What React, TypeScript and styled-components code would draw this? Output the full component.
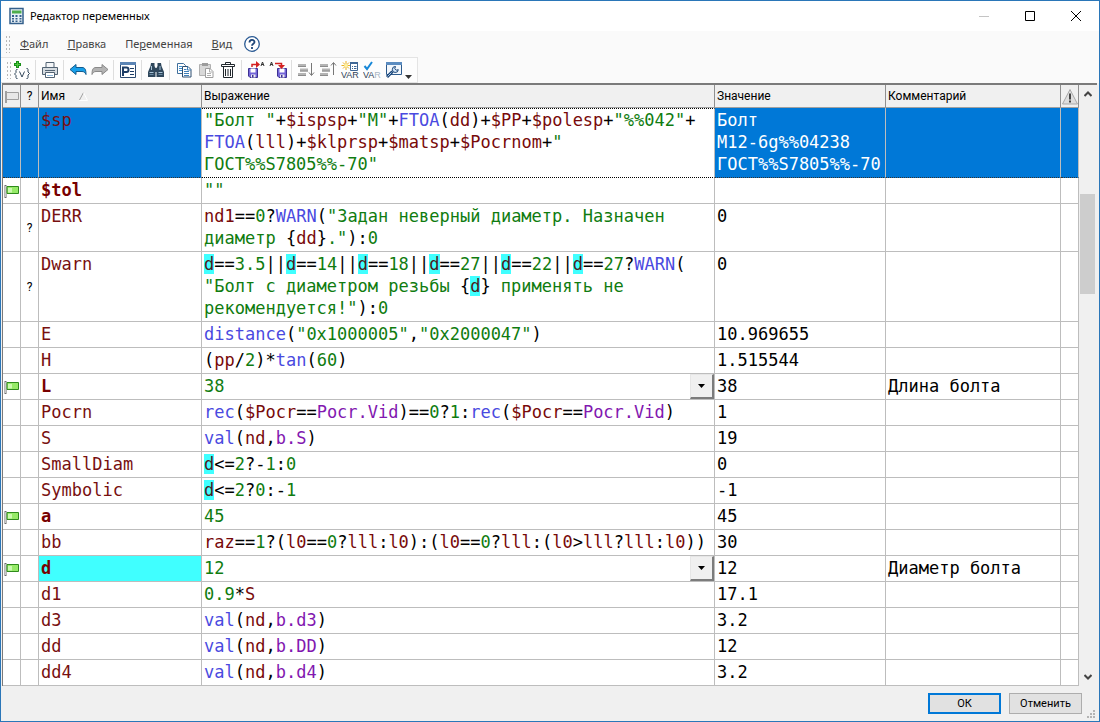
import React from 'react';
import styled, { createGlobalStyle } from 'styled-components';

const uiFont = '"Noto Sans", "Open Sans", sans-serif';
const labelFont = 'Roboto, "Noto Sans", sans-serif';
const codeFont = '"DejaVu Sans Mono", "Liberation Mono", monospace';

const GlobalStyle = createGlobalStyle`
  *, *::before, *::after { box-sizing: border-box; }
  body { margin: 0; background: #f0f0f0; font-family: ${uiFont}; font-size: 12px; color: #000; }
`;

const Window = styled.main`
  min-height: 100vh;
  display: flex;
  flex-direction: column;
  border: 1px solid #2a76b8;
  background: #f0f0f0;
`;

const TitleBar = styled.header`
  display: flex;
  align-items: center;
  height: 30px;
  padding-left: 8px;
  background: #fff;
`;

const Title = styled.h1`
  flex: 1;
  margin: 0 0 0 5px;
  font-size: 11px;
  font-weight: 400;
  line-height: 16px;
`;

const WindowButton = styled.button`
  display: flex;
  align-items: center;
  justify-content: center;
  width: 46px;
  height: 28px;
  padding: 0;
  border: 0;
  background: transparent;
`;

const Bars = styled.div`
  background: #fafafa;
`;

const MenuBar = styled.nav`
  display: flex;
  align-items: center;
  height: 26px;
  padding-left: 4px;
  gap: 19px;
`;

const MenuItem = styled.button`
  padding: 0;
  border: 0;
  background: transparent;
  font: 11px/18px ${uiFont};
  color: #444;
`;

const HelpButton = styled(MenuItem)`
  display: flex;
  margin-left: -7px;
`;

const Grip = styled.span`
  width: 5px;
  height: 18px;
  margin-right: -9px;
  background-image: radial-gradient(circle, #b8b8b8 0 1px, transparent 1px);
  background-size: 3px 4px;
`;

const ToolBar = styled.div`
  display: flex;
  align-items: center;
  width: fit-content;
  height: 26px;
  padding-left: 5px;
  border: 1px solid #e4e4e4;
  border-left: 0;
  background: #fdfdfd;
`;

const ToolGrip = styled(Grip)`
  margin-right: 0;
`;

const ToolButton = styled.button`
  display: flex;
  align-items: center;
  justify-content: center;
  width: 22px;
  height: 22px;
  padding: 0;
  border: 0;
  background: transparent;
`;

const MoreButton = styled(ToolButton)`
  width: 12px;
  align-items: flex-end;
  justify-content: flex-start;
`;

const Separator = styled.span`
  width: 1px;
  height: 20px;
  margin: 0 3px 0 2px;
  background: #dedede;
`;

const GridPane = styled.section`
  flex: 1;
  display: flex;
  margin: 0 2px 0 1px;
  border: solid #7a7a7a;
  border-width: 2px 0 0 1px;
  background: #fff;
`;

const Table = styled.table`
  flex: 1;
  min-width: 0;
  width: 100%;
  table-layout: fixed;
  border-collapse: separate;
  border-spacing: 0;
`;

const Col = styled.col<{ $width?: number }>`
  ${p => (p.$width ? `width: ${p.$width}px;` : '')}
`;

const HeadCell = styled.th<{ $center?: boolean }>`
  height: 23px;
  padding: ${p => (p.$center ? '0' : '0 2px')};
  border-right: 1px solid #8f8f8f;
  border-bottom: 1px solid #a0a0a0;
  background: #f0f0f0;
  font: 400 12px/20px ${labelFont};
  text-align: ${p => (p.$center ? 'center' : 'left')};
  white-space: nowrap;

  svg { vertical-align: middle; }
`;

const SortMark = styled.svg`
  margin-left: 14px;
`;

const Cell = styled.td<{ $selected?: boolean; $focus?: boolean; $marked?: boolean }>`
  height: 26px;
  padding: 1px 2px 2px;
  border-right: 1px solid #bdbdbd;
  border-bottom: 1px solid #bdbdbd;
  background: ${p => (p.$selected ? '#0078d7' : p.$marked ? '#40ffff' : '#fff')};
  color: ${p => (p.$selected ? '#fff' : '#000')};
  font: 17px/22px ${codeFont};
  vertical-align: top;
  white-space: pre;
  overflow: hidden;
  ${p => (p.$selected ? 'border-bottom: 1px dotted #333;' : '')}
  ${p => (p.$focus ? 'padding-top: 0; border-top: 1px dotted #000; border-bottom: 1px dotted #000;' : '')}
`;

const MarkCell = styled(Cell)`
  padding: 0;
  font: 12px/16px ${labelFont};
  text-align: center;
  vertical-align: middle;

  svg { display: block; }
`;

const Name = styled.span<{ $bold?: boolean }>`
  color: ${p => (p.$bold ? '#780000' : '#781010')};
  font-weight: ${p => (p.$bold ? 700 : 400)};
`;

type Kind = 'text' | 'num' | 'func' | 'ident' | 'member' | 'op' | 'hit';

const kindColor: Record<Kind, string> = {
  text: '#107c10',
  num: '#107c10',
  func: '#4a4ae0',
  ident: '#780a0a',
  member: '#8218b0',
  op: '#000',
  hit: '#4a2020',
};

const CodeLine = styled.div`
  height: 22px;
`;

const Token = styled.span<{ $kind: Kind }>`
  color: ${p => kindColor[p.$kind]};
  ${p => (p.$kind === 'hit' ? 'background: #40ffff;' : '')}
`;

const Combo = styled.div`
  display: grid;
  grid-template-columns: 1fr 24px;
  margin: -1px -2px -2px 0;
`;

const ComboSelect = styled.select`
  grid-area: 1 / 1 / 2 / 3;
  height: 25px;
  padding: 0 0 1px;
  border: 0;
  appearance: none;
  background: transparent;
  color: #107c10;
  font: 17px/22px ${codeFont};
`;

const ComboArrow = styled.span`
  grid-area: 1 / 2;
  display: flex;
  align-items: center;
  justify-content: center;
  border: solid;
  border-width: 1px 2px 2px 1px;
  border-color: #e6e6e6 #7c7c7c #7c7c7c #e6e6e6;
  background: #f0f0f0;
  pointer-events: none;
`;

const ScrollBar = styled.div`
  display: flex;
  flex-direction: column;
  width: 18px;
  background: #f0f0f0;
`;

const ScrollButton = styled.button`
  display: flex;
  align-items: center;
  justify-content: center;
  height: 18px;
  padding: 0;
  border: 0;
  background: transparent;
`;

const ScrollTrack = styled.div`
  flex: 1;
  display: grid;
  grid-template-rows: 91fr 100fr 374fr;
`;

const ScrollThumb = styled.div`
  grid-row: 2;
  margin: 0 2px 0 1px;
  background: #cdcdcd;
`;

const Footer = styled.footer`
  display: flex;
  align-items: center;
  justify-content: flex-end;
  gap: 8px;
  height: 35px;
  padding-left: 8px;
`;

const DialogButton = styled.button<{ $primary?: boolean }>`
  width: 73px;
  height: 21px;
  padding: 0;
  border: ${p => (p.$primary ? '2px solid #0078d7' : '1px solid #adadad')};
  background: #e1e1e1;
  font: 11px/16px ${labelFont};
`;

const SizeGrip = styled.svg`
  align-self: flex-end;
  margin: 0 4px 3px -3px;
`;

const FlagIcon = () => (
  <svg width="17" height="16" viewBox="0 0 17 16">
    <path d="M2.500 2v13" stroke="#6d6d6d" strokeWidth="2" />
    <path d="M2.500 3v11" stroke="#c8c8c8" />
    <path d="M4 3.500h11.500v7H4z" fill="#96ea68" stroke="#2f8a1c" />
    <path d="M5 5h4v4.500h-4z" fill="#ccf8b0" />
  </svg>
);

const icon = (children: React.ReactNode) => (
  <svg width="18" height="18" viewBox="0 0 18 18" fill="none">{children}</svg>
);

const Floppy = ({ x }: { x: number }) => (
  <g transform={`translate(${x} 7)`}>
    <path d="M.5.5h9v9H2l-1.500-1.500z" fill="#7466d8" stroke="#3d3192" />
    <path d="M2.500.5h5v4h-5z" fill="#fff" />
    <path d="M3 6.500h4.500V9.500H3z" fill="#eee" />
    <path d="M4 7h1.500v2.500H4z" fill="#3d3192" />
  </g>
);

const VarText = ({ fade }: { fade?: boolean }) => (
  <text x="0" y="17" fontSize="9" fontFamily="Liberation Sans, sans-serif" fill="#2f4256">
    VA<tspan fill={fade ? '#a9b6c4' : '#2f4256'}>R</tspan>
  </text>
);

const tools: ({ label: string; art: React.ReactNode } | null)[] = [
  {
    label: 'Новая переменная',
    art: icon(<>
      <path d="M4.500 0v7M1 3.500h7" stroke="#189018" strokeWidth="3" />
      <path d="M4.500 1v5M2 3.500h5" stroke="#50c840" />
      <path d="M4.500 8.500h-1l-.5 1v2l-1.500 1.500 1.500 1.500v2l.5 1h1M13.500 7.500h1l.5 1v2.500l1.500 1.500-1.500 1.500v2.500l-.5 1h-1M6.500 10.500l2.500 5.500 2.500-5.500" stroke="#33475a" />
    </>),
  },
  null,
  {
    label: 'Печать',
    art: icon(<>
      <path d="M5 6V1.500h8V6" fill="#f4f6f8" stroke="#526373" />
      <path d="M1.500 6.500h15v7h-15z" fill="#d6dce1" stroke="#526373" />
      <path d="M4 9.500h10" stroke="#526373" />
      <path d="M4.500 11.500h9v5h-9z" fill="#fff" stroke="#526373" />
      <path d="M6 14.500h6" stroke="#8ab4d8" />
    </>),
  },
  null,
  {
    label: 'Отменить действие',
    art: icon(<path d="M1 8.500l6-5v3h6c3 0 4 2 4 7-1-2-2-3-4-3H7v3z" fill="#18a0ea" stroke="#125a8c" />),
  },
  {
    label: 'Повторить действие',
    art: icon(<path d="M17 8.500l-6-5v3H5c-3 0-4 2-4 7 1-2 2-3 4-3h6v3z" fill="#b4b4b4" stroke="#8a8a8a" />),
  },
  null,
  {
    label: 'Свойства',
    art: icon(<>
      <path d="M1.500 1.500h15v15h-15z" fill="#fff" stroke="#2c4a70" />
      <path d="M1 1h16v3H1z" fill="#5b84b4" />
      <path d="M4 15V6.500h3.500q2 0 2 2.200t-2 2.200H4" stroke="#1d3d66" strokeWidth="2" />
      <path d="M11 7.500h4M11 10.500h4M11 13.500h4" stroke="#1d3d66" />
    </>),
  },
  null,
  {
    label: 'Найти',
    art: icon(<>
      <path d="M4 2h3.500v3L8.500 7v9H1v-5l2.500-6zM14 2h-3.500v3L9.500 7v9H17v-5l-2.500-6z" fill="#2f475c" />
      <path d="M8 7h2v4H8z" fill="#2f475c" />
      <path d="M2.500 11.500h4M11.500 11.500h4M4.500 5v4M13 5v4" stroke="#a9c4d8" />
      <path d="M2.500 13.500h4M11.500 13.500h4" stroke="#6b8ba3" />
    </>),
  },
  null,
  {
    label: 'Копировать',
    art: icon(<>
      <path d="M2.500 2.500h6l2 2v8h-8z" fill="#fff" stroke="#3f6f9c" />
      <path d="M4 5.500h3M4 7.500h4M4 9.500h4" stroke="#3f8fd0" />
      <path d="M7.500 5.500h5.500l3 3v7.500H7.500z" fill="#fff" stroke="#2f4f70" />
      <path d="M12.500 5.500v3.500h3.500M9 8.500h2.500M9 10.500h5M9 12.500h5M9 14.500h5" stroke="#3f7fb8" />
    </>),
  },
  {
    label: 'Вставить',
    art: icon(<>
      <path d="M2.500 3.500h11v11h-11z" fill="#d8d8d8" stroke="#b0b0b0" />
      <path d="M5 2h6v3H5z" fill="#9c9c9c" />
      <path d="M8.500 7.500h4.500l3 3v6H8.500z" fill="#fff" stroke="#9c9c9c" />
      <path d="M10 12.500h4M10 14.500h4M12.500 8v3h3" stroke="#b0b0b0" />
    </>),
  },
  {
    label: 'Удалить',
    art: icon(<>
      <path d="M6.500 3V1.500h5V3" stroke="#20262c" />
      <path d="M2.500 3.500h13v2h-13z" fill="#fff" stroke="#20262c" />
      <path d="M4.500 5.500h9v11h-9z" stroke="#20262c" />
      <path d="M6.500 8v7M9 8v7M11.500 8v7" stroke="#20262c" />
    </>),
  },
  null,
  {
    label: 'Сохранить в файл',
    art: icon(<>
      <Floppy x={1} />
      <path d="M5 6V3.500h6" stroke="#d42020" strokeWidth="1.500" />
      <path d="M9 0l4 3.500L9 7z" fill="#d42020" />
      <path d="M14 5l1.500-4L17 5M14.500 3.500h2" stroke="#333" />
    </>),
  },
  {
    label: 'Загрузить из файла',
    art: icon(<>
      <Floppy x={8} />
      <path d="M6 2.500h6.500V5" stroke="#d42020" strokeWidth="1.500" />
      <path d="M9 4h7l-3.500 4z" fill="#d42020" />
      <path d="M1 5l1.500-4L4 5M1.500 3.500h2" stroke="#333" />
    </>),
  },
  null,
  {
    label: 'Переместить вниз',
    art: icon(<>
      <path d="M1 3h8v3H1zM3 7.500h8v3H3zM1 12h8v3H1z" fill="#b4b4b4" />
      <path d="M1 5.500h8M3 10h8M1 14.500h8" stroke="#8c8c8c" />
      <path d="M14.500 2v12M12 11.500l2.500 3 2.500-3" stroke="#777" />
    </>),
  },
  {
    label: 'Переместить вверх',
    art: icon(<>
      <path d="M1 3h8v3H1zM3 7.500h8v3H3zM1 12h8v3H1z" fill="#b4b4b4" />
      <path d="M1 5.500h8M3 10h8M1 14.500h8" stroke="#8c8c8c" />
      <path d="M14.500 14V2M12 4.500l2.500-3 2.500 3" stroke="#777" />
    </>),
  },
  {
    label: 'Создать переменную',
    art: icon(<>
      <path d="M5 0v9M.5 4.500h9M2 1.500l6 6M8 1.500l-6 6" stroke="#eab020" />
      <circle cx="5" cy="4.500" r="1.800" fill="#fff2a0" />
      <path d="M9.500 1.500h7v8h-7z" fill="#fff" stroke="#3f6796" />
      <path d="M9 2h8" stroke="#3f6796" strokeWidth="2" />
      <path d="M11 5.500h1M13 5.500h2.500M11 7.500h1M13 7.500h2.500" stroke="#3f6796" />
      <VarText />
    </>),
  },
  {
    label: 'Проверить переменные',
    art: icon(<>
      <path d="M1.500 5l2.500 3 5-7" stroke="#1888d8" strokeWidth="2" />
      <VarText fade />
    </>),
  },
  {
    label: 'Параметры',
    art: icon(<>
      <path d="M1.500 1.500h15v12h-15z" fill="#f2f7fc" stroke="#2c5a8c" />
      <path d="M1 2.500h16" stroke="#5b8cc0" strokeWidth="3" />
      <path d="M2 16l5.500-5.500" stroke="#1d4678" strokeWidth="3" />
      <path d="M2.500 15.500l4-4" stroke="#a8cdf0" />
      <path d="M10.500 5.500a3 3 0 1 0 2.800 3.200l-2 .5-1.500-1.500z" fill="#cfe4f7" stroke="#1d4678" />
    </>),
  },
];

interface Variable {
  name: string;
  expr: string;
  value: string;
  comment?: string;
  flag?: boolean;
  note?: boolean;
  options?: boolean;
  selected?: boolean;
}

const variables: Variable[] = [
  {
    name: '$sp',
    expr: '"Болт "+$ispsp+"М"+FTOA(dd)+$PP+$polesp+"%%042"+\nFTOA(lll)+$klprsp+$matsp+$Pocrnom+"\nГОСТ%%S7805%%-70"',
    value: 'Болт\nМ12-6g%%04238\nГОСТ%%S7805%%-70',
    selected: true,
  },
  { name: '$tol', expr: '""', value: '', flag: true },
  {
    name: 'DERR',
    expr: 'nd1==0?WARN("Задан неверный диаметр. Назначен\nдиаметр {dd}."):0',
    value: '0',
    note: true,
  },
  {
    name: 'Dwarn',
    expr: 'd==3.5||d==14||d==18||d==27||d==22||d==27?WARN(\n"Болт с диаметром резьбы {d} применять не\nрекомендуется!"):0',
    value: '0',
    note: true,
  },
  { name: 'E', expr: 'distance("0x1000005","0x2000047")', value: '10.969655' },
  { name: 'H', expr: '(pp/2)*tan(60)', value: '1.515544' },
  { name: 'L', expr: '38', value: '38', comment: 'Длина болта', flag: true, options: true },
  { name: 'Pocrn', expr: 'rec($Pocr==Pocr.Vid)==0?1:rec($Pocr==Pocr.Vid)', value: '1' },
  { name: 'S', expr: 'val(nd,b.S)', value: '19' },
  { name: 'SmallDiam', expr: 'd<=2?-1:0', value: '0' },
  { name: 'Symbolic', expr: 'd<=2?0:-1', value: '-1' },
  { name: 'a', expr: '45', value: '45', flag: true },
  { name: 'bb', expr: 'raz==1?(l0==0?lll:l0):(l0==0?lll:(l0>lll?lll:l0))', value: '30' },
  { name: 'd', expr: '12', value: '12', comment: 'Диаметр болта', flag: true, options: true },
  { name: 'd1', expr: '0.9*S', value: '17.1' },
  { name: 'd3', expr: 'val(nd,b.d3)', value: '3.2' },
  { name: 'dd', expr: 'val(nd,b.DD)', value: '12' },
  { name: 'dd4', expr: 'val(nd,b.d4)', value: '3.2' },
];

const activeName = 'd';
const functions = ['FTOA', 'WARN', 'distance', 'tan', 'rec', 'val'];

function kindOf(part: string): Kind {
  if (part === activeName) return 'hit';
  if (part.startsWith('"')) return 'text';
  if (/^\d/.test(part)) return 'num';
  if (functions.includes(part)) return 'func';
  if (/^\w+\.\w+$/.test(part)) return 'member';
  if (/^[$\w]/.test(part)) return 'ident';
  return 'op';
}

interface Piece {
  kind: Kind;
  text: string;
}

/** Splits an expression into coloured pieces; names in braces inside a string are variables too. */
function tokenize(source: string): Piece[] {
  const parts = source.match(/"[^"]*"|\d+(?:\.\d+)?|[A-Za-z]\w*\.\w+|\$?[A-Za-z]\w*|[^\w"$]+/g) ?? [];
  return parts.flatMap((part): Piece[] => {
    const kind = kindOf(part);
    if (kind !== 'text') return [{ kind, text: part }];
    return part
      .split(/([{}])/)
      .map((text, i, all): Piece => {
        if (text === '{' || text === '}') return { kind: 'op', text };
        return { kind: all[i - 1] === '{' ? kindOf(text) : 'text', text };
      });
  });
}

function toLines(source: string): Piece[][] {
  const lines: Piece[][] = [[]];
  tokenize(source).forEach(({ kind, text }) => {
    text.split('\n').forEach((chunk, i) => {
      if (i > 0) lines.push([]);
      if (chunk) lines[lines.length - 1].push({ kind, text: chunk });
    });
  });
  return lines;
}

const Expression = ({ source }: { source: string }) => (
  <>
    {toLines(source).map((line, n) => (
      <CodeLine key={n}>
        {line.map((piece, i) => (
          <Token key={i} $kind={piece.kind}>{piece.text}</Token>
        ))}
      </CodeLine>
    ))}
  </>
);

const VariableRow = ({ v }: { v: Variable }) => (
  <tr>
    <MarkCell $selected={v.selected}>{v.flag && <FlagIcon />}</MarkCell>
    <MarkCell $selected={v.selected}>{v.note && '?'}</MarkCell>
    <Cell $selected={v.selected} $marked={v.name === activeName}>
      <Name $bold={v.flag}>{v.name}</Name>
    </Cell>
    <Cell $focus={v.selected}>
      {v.options ? (
        <Combo>
          <ComboSelect aria-label={v.name} defaultValue={v.expr}>
            <option>{v.expr}</option>
          </ComboSelect>
          <ComboArrow>
            <svg width="7" height="4" viewBox="0 0 7 4"><path d="M0 0h7L3.500 4z" /></svg>
          </ComboArrow>
        </Combo>
      ) : (
        <Expression source={v.expr} />
      )}
    </Cell>
    <Cell $selected={v.selected}>{v.value}</Cell>
    <Cell $selected={v.selected}>{v.comment}</Cell>
    <Cell $selected={v.selected} />
  </tr>
);

export default function App() {
  return (
    <>
      <GlobalStyle />
      <Window>
        <TitleBar>
          <svg width="16" height="18" viewBox="0 0 16 18">
            <path d="M1 1.500h13v15H1z" fill="#e8f0f6" stroke="#35608c" strokeWidth="1.500" />
            <path d="M3 3.500h9.500v3H3z" fill="#4fae4c" />
            <path d="M3 8h2v2H3zM6.500 8h2v2h-2zM10.500 8h2v2h-2zM3 11h2v1.500H3zM6.500 11h2v1.500h-2zM10.500 11h2v1.500h-2zM3 13.500h2V15H3zM6.500 13.500h2V15h-2zM10.500 13.500h2V15h-2z" fill="#35608c" />
          </svg>
          <Title>Редактор переменных</Title>
          <WindowButton aria-label="Свернуть">
            <svg width="10" height="10"><path d="M0 5.500h10" stroke="#c4c4c4" /></svg>
          </WindowButton>
          <WindowButton aria-label="Развернуть">
            <svg width="10" height="10"><path d="M.5.5h9v9h-9z" fill="none" stroke="#000" /></svg>
          </WindowButton>
          <WindowButton aria-label="Закрыть">
            <svg width="10" height="10"><path d="M0 0l10 10M10 0L0 10" stroke="#000" /></svg>
          </WindowButton>
        </TitleBar>
        <Bars>
          <MenuBar>
            <Grip />
            <MenuItem><u>Ф</u>айл</MenuItem>
            <MenuItem><u>П</u>равка</MenuItem>
            <MenuItem>Пе<u>р</u>еменная</MenuItem>
            <MenuItem><u>В</u>ид</MenuItem>
            <HelpButton aria-label="Справка">
              <svg width="16" height="16" viewBox="0 0 16 16" fill="none">
                <circle cx="8" cy="8" r="7.300" fill="#fff" stroke="#2a5a94" strokeWidth="1.300" />
                <path d="M5.500 6.500C5.500 3.200 10.500 3.200 10.500 6 10.500 7.800 8 7.600 8 9.800M8 11v2" stroke="#1f4678" strokeWidth="1.800" />
              </svg>
            </HelpButton>
          </MenuBar>
          <ToolBar role="toolbar">
            <ToolGrip />
            {tools.map((tool, i) =>
              tool ? (
                <ToolButton key={i} aria-label={tool.label}>{tool.art}</ToolButton>
              ) : (
                <Separator key={i} />
              ),
            )}
            <MoreButton aria-label="Ещё">
              <svg width="7" height="6" viewBox="0 0 7 6"><path d="M0 0h7L3.500 4z" fill="#333" /></svg>
            </MoreButton>
          </ToolBar>
        </Bars>
        <GridPane>
          <Table>
            <colgroup>
              <Col $width={18} />
              <Col $width={18} />
              <Col $width={163} />
              <Col />
              <Col $width={171} />
              <Col $width={175} />
              <Col $width={18} />
            </colgroup>
            <thead>
              <tr>
                <HeadCell $center aria-label="Флаг">
                  <svg width="16" height="16" viewBox="0 0 16 16" fill="none">
                    <path d="M2 2v12" stroke="#a0a0a0" strokeWidth="2" />
                    <path d="M3 3.500h11.500v7H3" fill="#e8e8e8" stroke="#a0a0a0" />
                  </svg>
                </HeadCell>
                <HeadCell $center>?</HeadCell>
                <HeadCell>
                  Имя
                  <SortMark width="9" height="9" viewBox="0 0 9 9" fill="none">
                    <path d="M.5 8L4.500.5" stroke="#a0a0a0" />
                    <path d="M4.500.5L8.500 8.500H.5" stroke="#fff" />
                  </SortMark>
                </HeadCell>
                <HeadCell>Выражение</HeadCell>
                <HeadCell>Значение</HeadCell>
                <HeadCell>Комментарий</HeadCell>
                <HeadCell $center aria-label="Предупреждение">
                  <svg width="16" height="18" viewBox="0 0 16 18" fill="none">
                    <path d="M8 1.500l7.500 14.500H.5z" fill="#dedede" stroke="#a8a8a8" />
                    <path d="M8 5.500v6M8 12.500v2" stroke="#444" strokeWidth="2" />
                  </svg>
                </HeadCell>
              </tr>
            </thead>
            <tbody>
              {variables.map(v => <VariableRow key={v.name} v={v} />)}
            </tbody>
          </Table>
          <ScrollBar>
            <ScrollButton aria-label="Вверх">
              <svg width="8" height="6" fill="none"><path d="M.5 5L4 1.500 7.500 5" stroke="#444" strokeWidth="2" /></svg>
            </ScrollButton>
            <ScrollTrack><ScrollThumb /></ScrollTrack>
            <ScrollButton aria-label="Вниз">
              <svg width="8" height="6" fill="none"><path d="M.5 1L4 4.500 7.500 1" stroke="#444" strokeWidth="2" /></svg>
            </ScrollButton>
          </ScrollBar>
        </GridPane>
        <Footer>
          <DialogButton $primary>ОК</DialogButton>
          <DialogButton>Отменить</DialogButton>
          <SizeGrip width="8" height="8" fill="#b4b4b4">
            <path d="M6 0h2v2H6zM3 3h2v2H3zM6 3h2v2H6zM0 6h2v2H0zM3 6h2v2H3zM6 6h2v2H6z" />
          </SizeGrip>
        </Footer>
      </Window>
    </>
  );
}
